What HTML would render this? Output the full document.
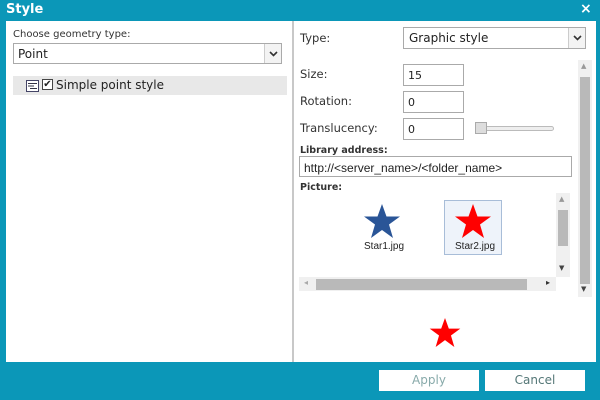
<!DOCTYPE html><html><head><style>
*{box-sizing:border-box;margin:0;padding:0}
body{width:600px;height:400px;background:#0b97b8;position:relative;overflow:hidden;font-family:"DejaVu Sans","Liberation Sans",sans-serif;font-size:11px;color:#222}
.a{position:absolute}
.box{position:absolute;background:#fff;border:1px solid #aaa}
.lbl{position:absolute;font-size:11.5px;color:#333}
.dd{position:absolute;right:0;top:0;width:17px;height:100%;border-left:1px solid #ccc;background:#f3f3f3}
.dd svg{position:absolute;left:4px;top:50%;margin-top:-3px}
</style></head><body>
<div class="a" style="left:6px;top:2px;color:#fff;font-weight:bold;font-size:13px">Style</div>
<div class="a" style="left:580px;top:1px;color:#fff;font-weight:bold;font-size:14px">×</div>
<div class="a" style="left:6px;top:21px;width:590px;height:341px;background:#fff"></div>
<div class="a" style="left:292px;top:21px;width:2px;height:341px;background:#c8c8c8"></div>
<div class="a" style="left:13px;top:29px;font-size:10px;color:#333">Choose geometry type:</div>
<div class="box" style="left:13px;top:43px;width:269px;height:21px"><span class="a" style="left:4px;top:3px;font-size:12px">Point</span><div class="dd"><svg width="9" height="6"><path d="M1 1L4.5 4.5L8 1" stroke="#333" stroke-width="1.6" fill="none"/></svg></div></div>
<div class="a" style="left:13px;top:76px;width:274px;height:19px;background:#e8e8e8"></div>
<svg class="a" style="left:26px;top:80px" width="13" height="12"><rect x="0.5" y="0.5" width="12" height="11" fill="#fff" stroke="#446"/><path d="M2 3.5h9M2 6h6M4 8.5h7" stroke="#334" stroke-width="1"/></svg>
<div class="a" style="left:42px;top:79px;width:11px;height:11px;border:1px solid #444;background:#fff;font-size:10px;line-height:9px;text-align:center">✔</div>
<div class="a" style="left:56px;top:78px;font-size:12px;color:#222">Simple point style</div>
<div class="lbl" style="left:300px;top:31px">Type:</div>
<div class="box" style="left:403px;top:27px;width:183px;height:22px"><span class="a" style="left:5px;top:3px;font-size:12px">Graphic style</span><div class="dd"><svg width="9" height="6"><path d="M1 1L4.5 4.5L8 1" stroke="#333" stroke-width="1.6" fill="none"/></svg></div></div>
<div class="lbl" style="left:300px;top:67px">Size:</div>
<div class="box" style="left:403px;top:64px;width:61px;height:22px"><span class="a" style="left:4px;top:4px">15</span></div>
<div class="lbl" style="left:300px;top:94px">Rotation:</div>
<div class="box" style="left:403px;top:91px;width:61px;height:22px"><span class="a" style="left:4px;top:4px">0</span></div>
<div class="lbl" style="left:300px;top:121px">Translucency:</div>
<div class="box" style="left:403px;top:118px;width:61px;height:22px"><span class="a" style="left:4px;top:4px">0</span></div>
<div class="a" style="left:476px;top:126px;width:78px;height:5px;border:1px solid #bbb;border-radius:3px;background:#eee"></div>
<div class="a" style="left:475px;top:122px;width:12px;height:12px;border:1px solid #aaa;background:#ddd"></div>
<div class="a" style="left:300px;top:145px;font-size:9.5px;color:#333;font-weight:bold">Library address:</div>
<div class="box" style="left:299px;top:156px;width:273px;height:21px"><span class="a" style="left:4px;top:4px;font-family:'Liberation Sans',sans-serif;font-size:12px">http://&lt;server_name&gt;/&lt;folder_name&gt;</span></div>
<div class="a" style="left:300px;top:182px;font-size:9.5px;color:#333;font-weight:bold">Picture:</div>
<div class="a" style="left:578px;top:60px;width:14px;height:237px;background:#f0f0f0"></div>
<div class="a" style="left:580px;top:77px;width:10px;height:207px;background:#b9b9b9"></div>
<div class="a" style="left:581px;top:62px;font-size:7px;color:#999">▲</div>
<div class="a" style="left:581px;top:285px;font-size:7px;color:#444">▼</div>
<div class="a" style="left:556px;top:193px;width:14px;height:84px;background:#f0f0f0"></div>
<div class="a" style="left:558px;top:210px;width:10px;height:36px;background:#b9b9b9"></div>
<div class="a" style="left:559px;top:195px;font-size:7px;color:#999">▲</div>
<div class="a" style="left:559px;top:264px;font-size:7px;color:#444">▼</div>
<div class="a" style="left:299px;top:277px;width:257px;height:14px;background:#f0f0f0"></div>
<div class="a" style="left:316px;top:279px;width:211px;height:11px;background:#b9b9b9"></div>
<div class="a" style="left:304px;top:278px;font-size:8px;color:#aaa">◂</div>
<div class="a" style="left:546px;top:278px;font-size:8px;color:#333">▸</div>
<svg class="a" style="left:362px;top:203px" width="40" height="36" viewBox="0 0 40 36"><polygon points="20,1 24.5,13.5 38,13.5 27,21.5 31,35 20,27 9,35 13,21.5 2,13.5 15.5,13.5" fill="#2a5597"/></svg>
<div class="a" style="left:364px;top:241px;font-family:'Liberation Sans',sans-serif;font-size:10px">Star1.jpg</div>
<div class="a" style="left:444px;top:200px;width:58px;height:55px;border:1px solid #a8bdd8;background:#eef3fa"></div>
<svg class="a" style="left:453px;top:203px" width="40" height="36" viewBox="0 0 40 36"><polygon points="20,1 24.5,13.5 38,13.5 27,21.5 31,35 20,27 9,35 13,21.5 2,13.5 15.5,13.5" fill="#f00"/></svg>
<div class="a" style="left:455px;top:241px;font-family:'Liberation Sans',sans-serif;font-size:10px">Star2.jpg</div>
<svg class="a" style="left:428px;top:317px" width="34" height="31" viewBox="0 0 40 36"><polygon points="20,1 24.5,13.5 38,13.5 27,21.5 31,35 20,27 9,35 13,21.5 2,13.5 15.5,13.5" fill="#f00"/></svg>
<div class="a" style="left:379px;top:370px;width:100px;height:21px;background:#fff;color:#8aa;text-align:center;line-height:21px;font-size:12px">Apply</div>
<div class="a" style="left:485px;top:370px;width:100px;height:21px;background:#fff;color:#577;text-align:center;line-height:21px;font-size:12px">Cancel</div>
</body></html>
